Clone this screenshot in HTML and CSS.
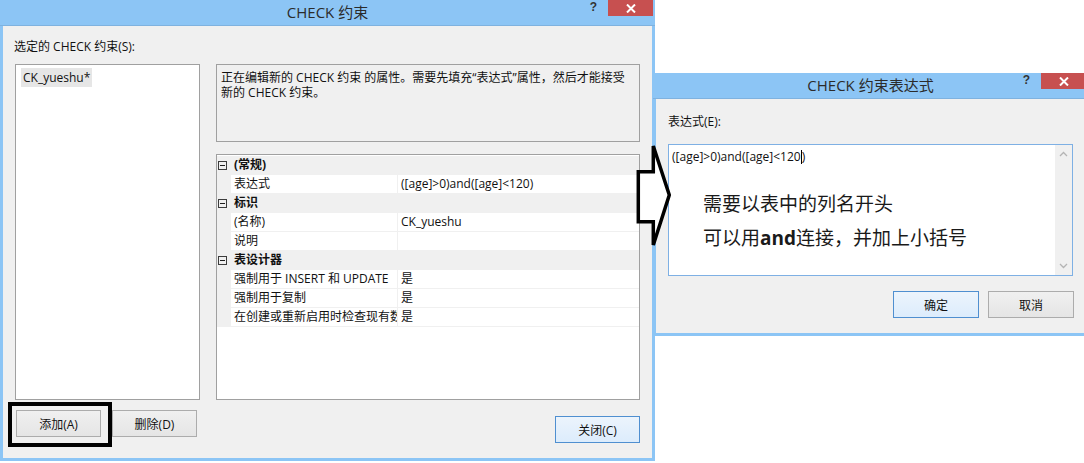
FILE: index.html
```html
<!DOCTYPE html>
<html lang="zh-CN">
<head>
  <meta charset="UTF-8" />
  <meta name="viewport" content="width=device-width, initial-scale=1.0" />
  <title>CHECK 约束</title>
  <link rel="stylesheet" href="styles.css">
</head>
<body>
  <div class="stage">
    <!-- 主对话框 -->
    <div class="dlg dlg-main">
      <div class="titlebar">
        <span class="title">CHECK 约束</span>
        <div class="ctrls">
          <span class="help">?</span>
          <span class="close">
            <svg width="10" height="9" viewBox="0 0 10 9"><path d="M1 0.5 L9 8.5 M9 0.5 L1 8.5" stroke="#fff" stroke-width="2"/></svg>
          </span>
        </div>
      </div>
      <div class="body">
        <div class="caption">选定的 CHECK 约束(S):</div>
        <div class="split">
          <div class="list">
            <div class="item">CK_yueshu*</div>
          </div>
          <div class="side">
            <div class="desc">
              <span class="line">正在编辑新的 CHECK 约束 的属性。需要先填充“表达式”属性，然后才能接受</span>
              <span class="line">新的 CHECK 约束。</span>
            </div>
            <div class="grid">
              <div class="row cat"><span class="gut"><span class="tog"></span></span><span class="name">(常规)</span></div>
              <div class="row prop"><span class="gut"></span><span class="name">表达式</span><span class="val">([age]&gt;0)and([age]&lt;120)</span></div>
              <div class="row cat"><span class="gut"><span class="tog"></span></span><span class="name">标识</span></div>
              <div class="row prop"><span class="gut"></span><span class="name">(名称)</span><span class="val">CK_yueshu</span></div>
              <div class="row prop"><span class="gut"></span><span class="name">说明</span><span class="val"></span></div>
              <div class="row cat"><span class="gut"><span class="tog"></span></span><span class="name">表设计器</span></div>
              <div class="row prop"><span class="gut"></span><span class="name">强制用于 INSERT 和 UPDATE</span><span class="val">是</span></div>
              <div class="row prop"><span class="gut"></span><span class="name">强制用于复制</span><span class="val">是</span></div>
              <div class="row prop"><span class="gut"></span><span class="name">在创建或重新启用时检查现有数据</span><span class="val">是</span></div>
            </div>
          </div>
        </div>
        <div class="actions">
          <div class="btns">
            <button class="btn">添加(A)</button>
            <button class="btn">删除(D)</button>
          </div>
          <button class="btn btn-default btn-close">关闭(C)</button>
        </div>
        <div class="mark"></div>
      </div>
    </div>

    <!-- 表达式对话框 -->
    <div class="dlg dlg-expr">
      <div class="titlebar">
        <span class="title">CHECK 约束表达式</span>
        <div class="ctrls">
          <span class="help">?</span>
          <span class="close">
            <svg width="10" height="9" viewBox="0 0 10 9"><path d="M1 0.5 L9 8.5 M9 0.5 L1 8.5" stroke="#fff" stroke-width="2"/></svg>
          </span>
        </div>
      </div>
      <div class="body">
        <div class="caption">表达式(E):</div>
        <div class="expr-box">
          <div class="expr-text">
            <div class="code">([age]&gt;0)and([age]&lt;120<span class="caret"></span>)</div>
            <div class="note">
              <p>需要以表中的列名开头</p>
              <p>可以用<b>and</b>连接，并加上小括号</p>
            </div>
          </div>
          <div class="vscroll">
            <svg width="9" height="6" viewBox="0 0 9 6"><path d="M1 5 L4.5 1.5 L8 5" fill="none" stroke="#b4b4b4" stroke-width="1.3"/></svg>
            <svg width="9" height="6" viewBox="0 0 9 6"><path d="M1 1 L4.5 4.5 L8 1" fill="none" stroke="#b4b4b4" stroke-width="1.3"/></svg>
          </div>
        </div>
        <div class="expr-actions">
          <button class="btn btn-wide btn-default">确定</button>
          <button class="btn btn-wide">取消</button>
        </div>
      </div>
    </div>

    <svg class="arrow" width="36" height="105" viewBox="0 0 36 105">
      <polygon points="2.3,28.7 17.3,28.7 17.3,3 33.3,52 17.3,102 17.3,78.7 2.3,78.7" fill="#fff" stroke="#000" stroke-width="3.5" stroke-linejoin="miter"/>
    </svg>
  </div>
</body>
</html>
```

FILE: styles.css
```css
* { box-sizing: border-box; margin: 0; padding: 0; }
body {
  background: #fff;
  font-family: "Open Sans", "Noto Sans CJK SC", sans-serif;
  font-size: 12px;
  color: #111;
  overflow: hidden;
}
.stage {
  display: flex;
  align-items: flex-start;
  width: 1100px;
  position: relative;
}
.dlg {
  background: #8cc5f5;
  padding: 0 3px 3px;
  flex-shrink: 0;
  display: flex;
  flex-direction: column;
}
.dlg-main {
  width: 655px;
  height: 461px;
}
.dlg-expr {
  width: 435px;
  margin: 73px 0 0 -2px;
  position: relative;
  z-index: 1;
}
.titlebar {
  height: 26px;
  margin: 0 -3px;
  display: grid;
  grid-template-columns: 1fr auto 1fr;
  border-bottom: 1px solid #7fb2df;
}
.title {
  grid-column: 2;
  line-height: 25px;
  font-size: 15px;
  color: #2b2b2b;
  white-space: nowrap;
}
.ctrls {
  grid-column: 3;
  justify-self: end;
  display: flex;
  align-items: flex-start;
}
.help {
  font-family: "Liberation Sans", sans-serif;
  font-weight: bold;
  font-size: 12px;
  line-height: 15px;
  color: #333;
  margin-right: 11px;
}
.close {
  width: 45px;
  height: 16px;
  margin-right: 2px;
  background: #c75050;
  display: flex;
  align-items: center;
  justify-content: center;
}
.body {
  flex: 1;
  background: #f0f0f0;
  padding: 13px 12px 15px 12px;
  position: relative;
  display: flex;
  flex-direction: column;
}
.dlg-expr .body {
  padding: 15px 12px 15px 12px;
}
.caption {
  line-height: 16px;
}
.dlg-main .caption { margin-left: -1px; }
.split {
  display: flex;
  gap: 16px;
  margin-top: 9px;
  height: 336px;
}
.list {
  width: 185px;
  background: #fff;
  border: 1px solid #a0a0a0;
  padding: 3px 0 0 5px;
}
.item {
  display: inline-block;
  background: #e6e6e6;
  padding: 0 2px;
  line-height: 19px;
}
.side {
  width: 424px;
  display: flex;
  flex-direction: column;
  gap: 12px;
}
.desc {
  height: 78px;
  border: 1px solid #a0a0a0;
  padding: 5px 4px;
  line-height: 15px;
}
.desc .line {
  display: block;
  white-space: nowrap;
}
.grid {
  flex: 1;
  background: #fff;
  border: 1px solid #a0a0a0;
  padding-top: 1px;
}
.row {
  display: grid;
  grid-template-columns: 14px 166px 1fr;
  height: 19px;
  line-height: 18px;
  border-bottom: 1px solid #f0f0f0;
}
.row .gut {
  background: #f0f0f0;
  display: flex;
  align-items: center;
}
.row .name {
  padding-left: 3px;
  white-space: nowrap;
  overflow: hidden;
}
.row .val {
  padding-left: 3px;
  border-left: 1px solid #f0f0f0;
  white-space: nowrap;
}
.cat {
  background: #f0f0f0;
}
.cat .name {
  font-weight: bold;
  grid-column: 2 / 4;
}
.tog {
  width: 9px;
  height: 9px;
  margin-left: 1px;
  border: 1px solid #3c3c3c;
  position: relative;
}
.tog::after {
  content: "";
  position: absolute;
  left: 1px;
  right: 1px;
  top: 3px;
  height: 1px;
  background: #1e1e1e;
}
.actions {
  display: flex;
  justify-content: space-between;
  margin-top: 10px;
  height: 33px;
}
.btns {
  display: flex;
  gap: 11px;
  margin-left: 1px;
}
.btn {
  width: 85px;
  height: 27px;
  font: inherit;
  color: #111;
  background: linear-gradient(#f0f0f0, #e5e5e5);
  border: 1px solid #acacac;
}
.btn-wide { width: 86px; }
.btn-default {
  border-color: #4f8fd0;
  background: linear-gradient(#ecf4fc, #dcecfc);
}
.btn-close { align-self: flex-end; }
.mark {
  position: absolute;
  left: 5px;
  top: 376px;
  width: 104px;
  height: 45px;
  border: 4px solid #000;
}
.expr-box {
  margin-top: 14px;
  height: 132px;
  border: 1px solid #7eb0e4;
  background: #fff;
  display: flex;
}
.expr-text {
  flex: 1;
  padding: 4px 0 0 3px;
}
.code {
  line-height: 16px;
  white-space: nowrap;
}
.caret {
  display: inline-block;
  width: 1px;
  height: 14px;
  background: #000;
  vertical-align: -3px;
}
.note {
  margin-top: 21px;
  padding-left: 31px;
  font-family: "Noto Sans CJK SC", sans-serif;
  font-size: 19px;
  line-height: 34px;
  color: #1a1a1a;
}
.note b {
  font-family: "Open Sans", sans-serif;
  font-weight: 700;
}
.vscroll {
  width: 17px;
  background: #f0f0f0;
  display: flex;
  flex-direction: column;
  justify-content: space-between;
  align-items: center;
  padding: 6px 0 6px;
}
.expr-actions {
  display: flex;
  justify-content: flex-end;
  gap: 9px;
  margin-top: 15px;
  margin-right: -1px;
}
.arrow {
  position: absolute;
  left: 636px;
  top: 143px;
  z-index: 2;
}
```
